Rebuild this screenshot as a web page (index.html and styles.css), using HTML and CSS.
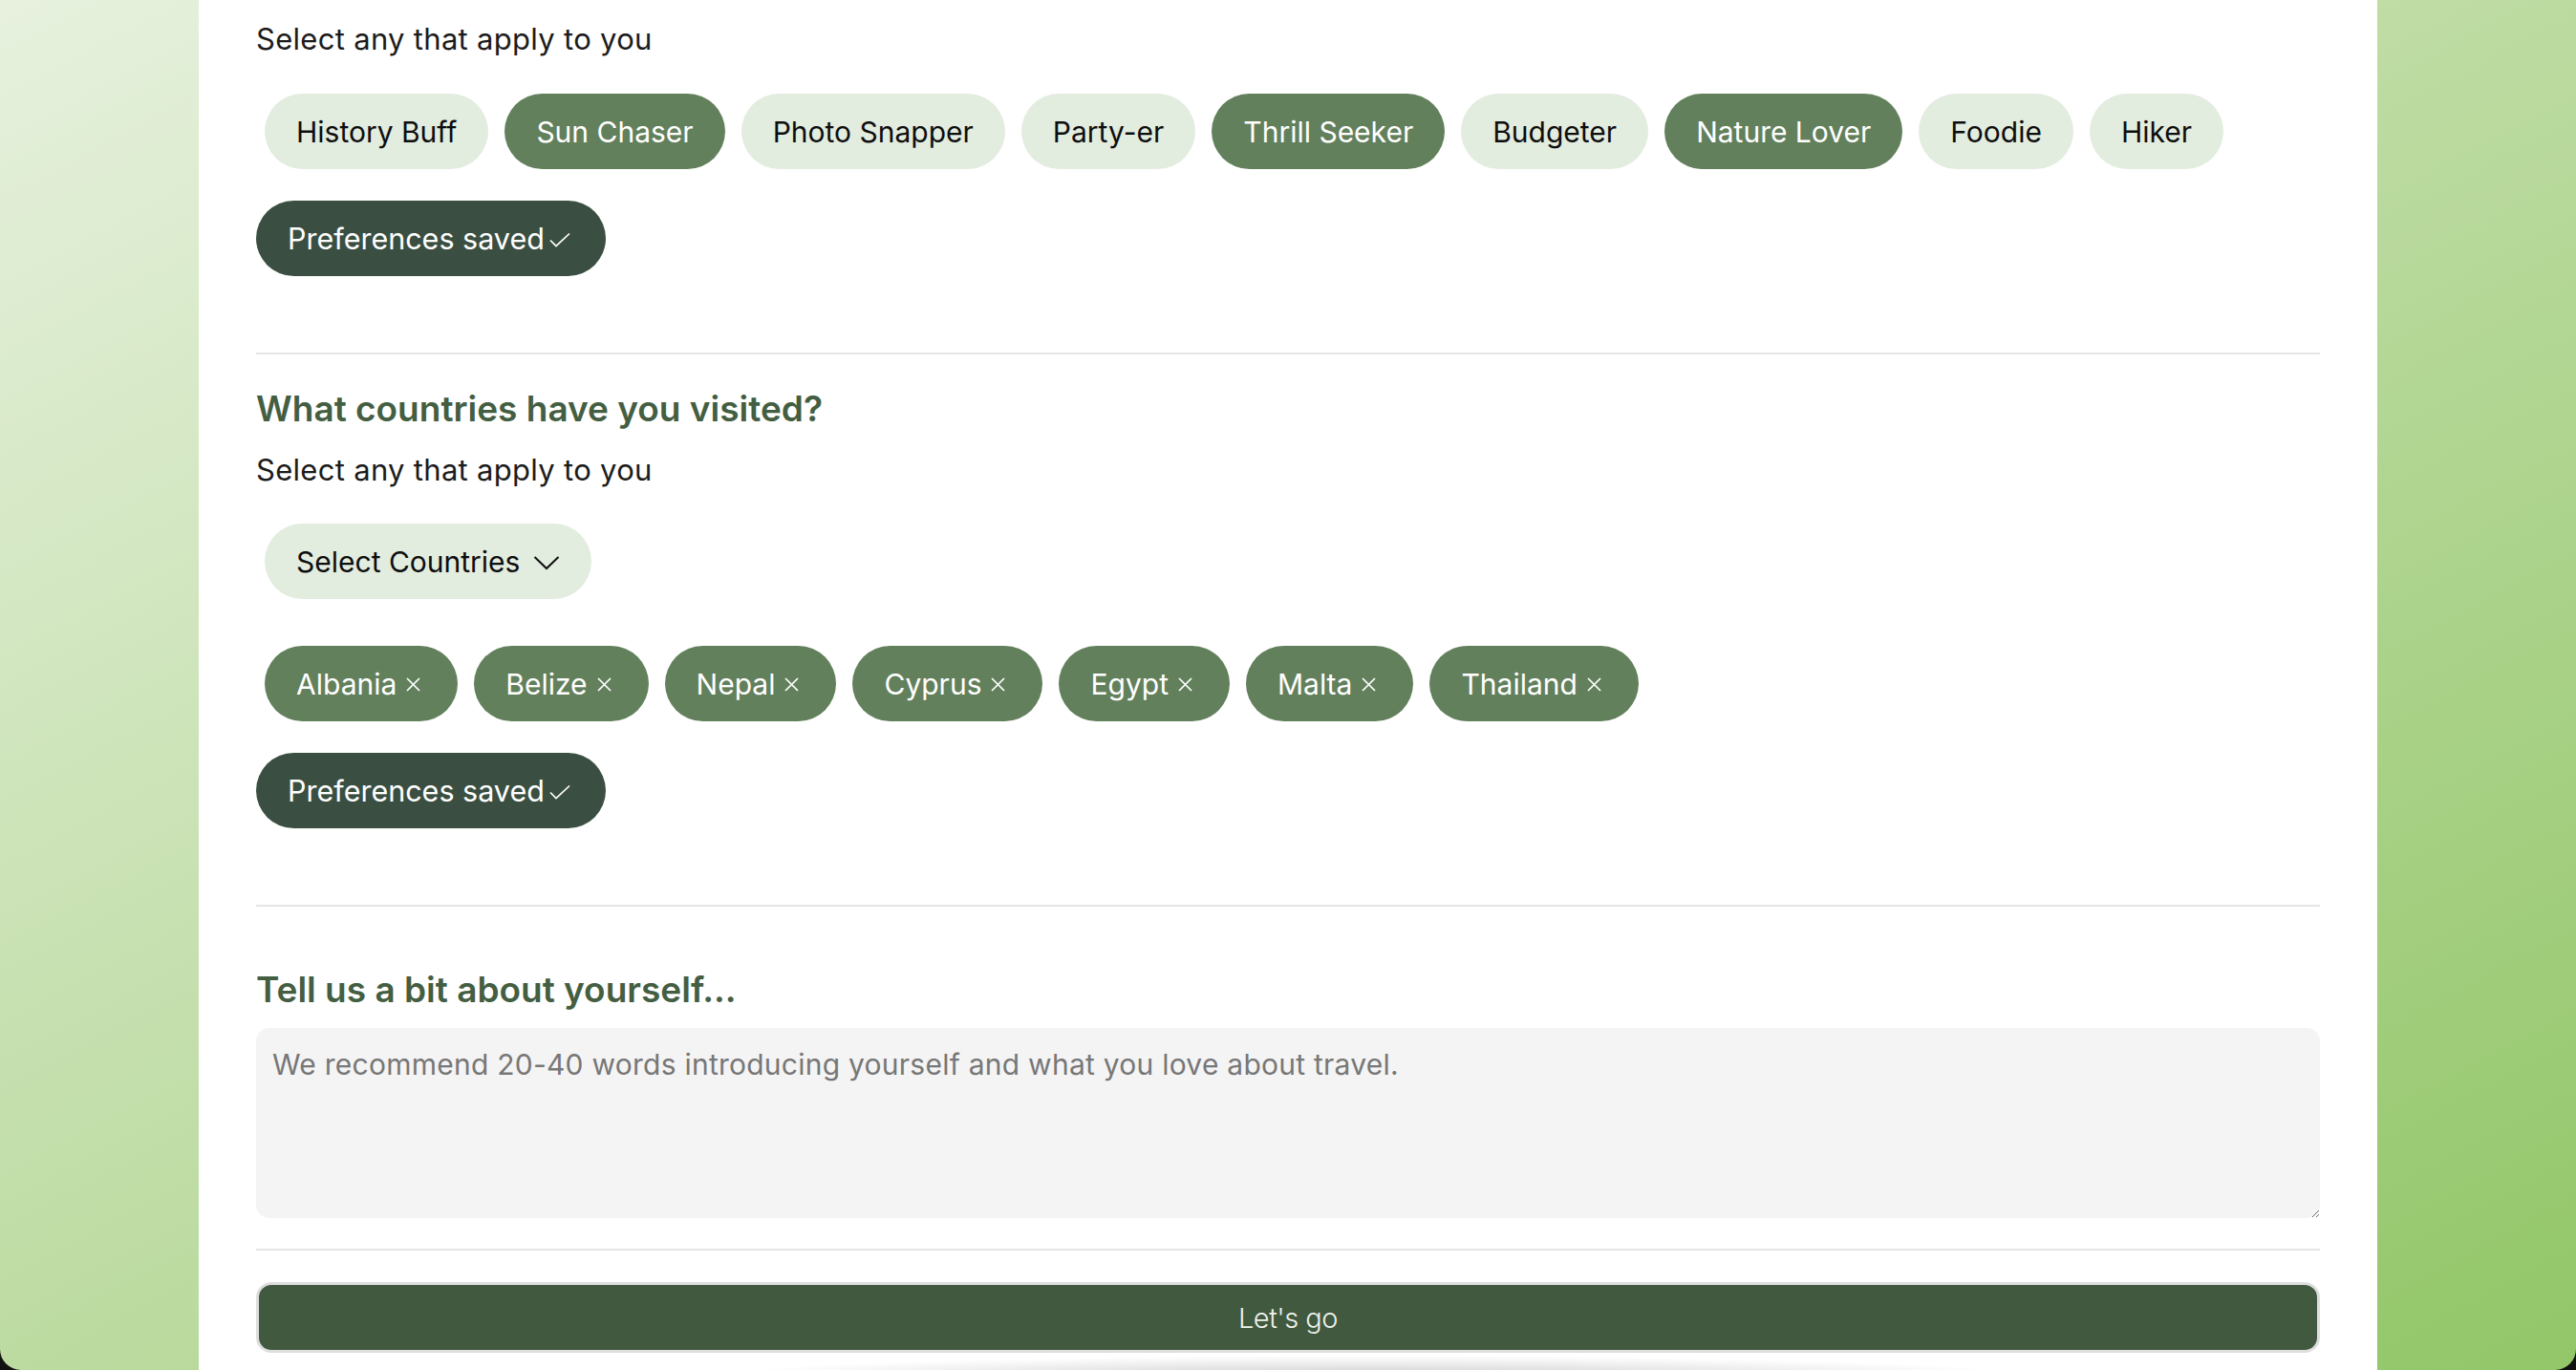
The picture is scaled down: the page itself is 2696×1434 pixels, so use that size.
FILE: index.html
```html
<!DOCTYPE html>
<html lang="en">
<head>
<meta charset="utf-8">
<title>Travel preferences</title>
<link rel="stylesheet" href="styles.css">
</head>
<body>
<div class="window">
  <main class="card">
    <section class="section first">
      <h2 class="q-title">What kind of traveller are you?</h2>
      <p class="q-sub">Select any that apply to you</p>
      <div class="chips">
        <span class="chip">History Buff</span>
        <span class="chip on">Sun Chaser</span>
        <span class="chip">Photo Snapper</span>
        <span class="chip">Party-er</span>
        <span class="chip on">Thrill Seeker</span>
        <span class="chip">Budgeter</span>
        <span class="chip on">Nature Lover</span>
        <span class="chip">Foodie</span>
        <span class="chip">Hiker</span>
      </div>
      <div class="saved">Preferences saved<svg class="check" width="22" height="16" viewBox="0 0 22 16"><polyline points="1,8.5 7,14.5 21,1.5" fill="none" stroke="#fff" stroke-width="1.7"/></svg></div>
    </section>
    <hr class="divider">
    <section class="section">
      <h2 class="q-title">What countries have you visited?</h2>
      <p class="q-sub">Select any that apply to you</p>
      <div class="chips select-row">
        <span class="chip">Select Countries<svg class="chev" width="28" height="16" viewBox="0 0 28 16"><polyline points="1.5,2 14,14 26.5,2" fill="none" stroke="#111" stroke-width="2"/></svg></span>
      </div>
      <div class="chips country-row">
        <span class="chip on tag">Albania<svg class="x" width="15" height="15" viewBox="0 0 15 15"><path d="M1 1L14 14M14 1L1 14" stroke="#fff" stroke-width="1.7"/></svg></span>
        <span class="chip on tag">Belize<svg class="x" width="15" height="15" viewBox="0 0 15 15"><path d="M1 1L14 14M14 1L1 14" stroke="#fff" stroke-width="1.7"/></svg></span>
        <span class="chip on tag">Nepal<svg class="x" width="15" height="15" viewBox="0 0 15 15"><path d="M1 1L14 14M14 1L1 14" stroke="#fff" stroke-width="1.7"/></svg></span>
        <span class="chip on tag">Cyprus<svg class="x" width="15" height="15" viewBox="0 0 15 15"><path d="M1 1L14 14M14 1L1 14" stroke="#fff" stroke-width="1.7"/></svg></span>
        <span class="chip on tag">Egypt<svg class="x" width="15" height="15" viewBox="0 0 15 15"><path d="M1 1L14 14M14 1L1 14" stroke="#fff" stroke-width="1.7"/></svg></span>
        <span class="chip on tag">Malta<svg class="x" width="15" height="15" viewBox="0 0 15 15"><path d="M1 1L14 14M14 1L1 14" stroke="#fff" stroke-width="1.7"/></svg></span>
        <span class="chip on tag">Thailand<svg class="x" width="15" height="15" viewBox="0 0 15 15"><path d="M1 1L14 14M14 1L1 14" stroke="#fff" stroke-width="1.7"/></svg></span>
      </div>
      <div class="saved">Preferences saved<svg class="check" width="22" height="16" viewBox="0 0 22 16"><polyline points="1,8.5 7,14.5 21,1.5" fill="none" stroke="#fff" stroke-width="1.7"/></svg></div>
    </section>
    <hr class="divider">
    <section class="section about">
      <h2 class="q-title">Tell us a bit about yourself...</h2>
      <textarea class="bio" placeholder="We recommend 20-40 words introducing yourself and what you love about travel."></textarea>
    </section>
    <hr class="divider small">
    <button class="go" type="button">Let's go</button>
    <div class="shade"></div>
  </main>
</div>
</body>
</html>
```
FILE: styles.css
```css
html, body {
  margin: 0;
  padding: 0;
  height: 100%;
  background: #111;
  overflow: hidden;
}

.window {
  height: 1434px;
  overflow: hidden;
  border-radius: 0 0 22px 22px;
  background: linear-gradient(to bottom right, #e7f1de 0%, #bcdba1 50%, #92c668 100%);
  display: flex;
  justify-content: center;
}

.card {
  width: 2280px;
  box-sizing: border-box;
  background: #fff;
  padding: 0 60px;
  display: flex;
  flex-direction: column;
  font-family: Inter, "Noto Sans", sans-serif;
}

.card > * {
  flex-shrink: 0;
}

.section {
  display: flex;
  flex-direction: column;
  align-items: flex-start;
}

.q-title {
  margin: 33px 0 0;
  font-size: 37px;
  line-height: 48px;
  font-weight: 600;
  letter-spacing: 0;
  color: #445e42;
  font-family: Inter, "Noto Sans", sans-serif;
}

.first .q-title {
  margin-top: -47px;
}

.q-sub {
  margin: 20px 0 0;
  font-size: 31px;
  line-height: 40px;
  color: #1c1c1c;
  letter-spacing: 0.3px;
}

.chips {
  display: flex;
  flex-wrap: wrap;
  gap: 17px;
  padding-left: 9px;
  margin-top: 37px;
}

.select-row {
  margin-top: 36px;
}

.country-row {
  margin-top: 49px;
}

.chip {
  height: 79px;
  box-sizing: border-box;
  padding: 0 33px;
  border-radius: 40px;
  background: #e2ecdf;
  color: #0e0e0e;
  font-size: 30px;
  display: inline-flex;
  align-items: center;
  white-space: nowrap;
}

.chip.on {
  background: #63805c;
  color: #fff;
}

.chip.tag {
  padding-right: 39px;
}

.chev {
  margin-left: 14px;
  margin-top: 2px;
}

.x {
  margin-left: 10px;
  margin-top: 1px;
}

.saved {
  margin-top: 33px;
  height: 79px;
  box-sizing: border-box;
  padding: 0 37px 0 33px;
  border-radius: 40px;
  background: #3a4f42;
  color: #fff;
  font-size: 30.5px;
  display: inline-flex;
  align-items: center;
  gap: 5px;
}

.check {
  margin-top: 2px;
}

.divider {
  border: 0;
  height: 2px;
  background: #e5e5e5;
  margin: 80px 0 0;
  width: 100%;
}

.about .q-title {
  margin-top: 63px;
}

.bio {
  margin-top: 16px;
  width: 100%;
  height: 199px;
  box-sizing: border-box;
  border: 0;
  border-radius: 14px;
  background: #f4f4f4;
  padding: 18px 17px;
  font-family: Inter, "Noto Sans", sans-serif;
  font-size: 30px;
  line-height: 40px;
  letter-spacing: 0.25px;
  color: #333;
  resize: vertical;
  outline: none;
}

.bio::placeholder {
  color: #777;
}

.divider.small {
  margin-top: 32px;
}

.go {
  margin-top: 33px;
  height: 74px;
  width: 100%;
  border: 3px solid #dedede;
  border-radius: 16px;
  background: #41593f;
  color: #eef2ec;
  font-family: Inter, "Noto Sans", sans-serif;
  font-size: 29px;
  font-weight: 300;
  letter-spacing: -0.5px;
  cursor: pointer;
}

.shade {
  margin: 3px 0 0 470px;
  width: 1400px;
  height: 22px;
  background: radial-gradient(ellipse 50% 100% at 50% 100%, rgba(0,0,0,0.2), rgba(0,0,0,0.08) 60%, rgba(0,0,0,0) 100%);
}
```
